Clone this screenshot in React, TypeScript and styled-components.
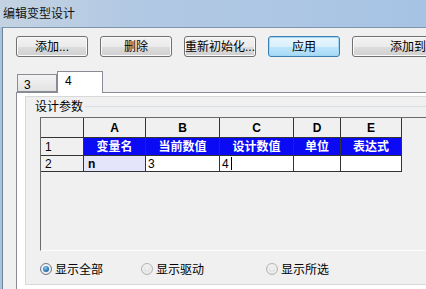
import styled, { createGlobalStyle } from "styled-components";

const GlobalStyle = createGlobalStyle`
    html, body {
        margin: 0;
        padding: 0;
        background: #f0f0f0;
    }
    body {
        font-family: "Liberation Sans", "Noto Sans CJK SC", sans-serif;
        font-size: 12px;
        color: #000;
    }
`;

const Window = styled.div`
    width: 426px;
    height: 289px;
    overflow: hidden;
    display: flex;
    flex-direction: column;
    background: #f0f0f0;
`;

const TitleBar = styled.div`
    flex: none;
    height: 27px;
    box-sizing: border-box;
    display: flex;
    align-items: center;
    padding: 0 0 1px 3px;
    background: linear-gradient(to right, #c4d3e2 0%, #b2c9e3 30%, #a7c3e4 100%);
    font-family: "Noto Sans CJK SC", sans-serif;
    font-size: 12px;
    line-height: 12px;
    color: #111;
`;

const Frame = styled.div`
    flex: 1;
    min-height: 0;
    display: flex;
    border-left: 2px solid #a9c2de;
`;

const Client = styled.div`
    flex: 1;
    min-width: 0;
    display: flex;
    flex-direction: column;
    padding: 8px 0 0 13px;
    border-left: 1px solid #6f8296;
    border-top: 1px solid #7f95ad;
    background: #f0f0f0;
`;

const ButtonRow = styled.div`
    display: flex;
    gap: 12px;
`;

const Button = styled.button<{ $default?: boolean; $w?: number }>`
    flex: none;
    width: ${(p) => p.$w ?? 72}px;
    height: 21px;
    padding: 0;
    box-sizing: border-box;
    border-radius: 3px;
    font-family: "Liberation Sans", "Noto Sans CJK SC", sans-serif;
    font-size: 12px;
    line-height: 12px;
    color: #000;
    border: 1px solid ${(p) => (p.$default ? "#3c7fb1" : "#707070")};
    background: ${(p) =>
        p.$default
            ? "linear-gradient(#eaf6fd 0%, #d9f0fc 50%, #bee6fd 51%, #a7d9f5 100%)"
            : "linear-gradient(#f2f2f2 0%, #ebebeb 50%, #dddddd 51%, #cfcfcf 100%)"};
    box-shadow: ${(p) => (p.$default ? "inset 0 0 0 1px #9fd7f5" : "inset 0 0 0 1px #fbfbfb")};
`;

const TabStrip = styled.div`
    margin-top: 14px;
    height: 21px;
    display: flex;
    align-items: flex-end;
    padding-left: 1px;
    position: relative;
    z-index: 1;
`;

const Tab = styled.div<{ $active?: boolean }>`
    box-sizing: border-box;
    width: ${(p) => (p.$active ? 46 : 40)}px;
    height: ${(p) => (p.$active ? 22 : 18)}px;
    margin-bottom: ${(p) => (p.$active ? -1 : 0)}px;
    padding: ${(p) => (p.$active ? "3px 0 0 7px" : "4px 0 0 6px")};
    border: 1px solid #898c95;
    border-bottom: ${(p) => (p.$active ? "none" : "1px solid #898c95")};
    background: ${(p) => (p.$active ? "#ffffff" : "linear-gradient(#f3f3f3, #e3e3e3)")};
    font-size: 12px;
    line-height: 13px;
`;

const Panel = styled.div`
    flex: 1;
    min-height: 0;
    width: calc(100% + 20px);
    padding: 3px 0 0 8px;
    border: 1px solid #898c95;
    border-right: none;
    border-bottom: none;
    background: #fff;
`;

const Inner = styled.div`
    height: 189px;
    box-sizing: border-box;
    display: flex;
    flex-direction: column;
    background: #f0f0f0;
    border: 1px solid #d8d8d8;
    border-right: none;
`;

const Legend = styled.div`
    margin-top: 1px;
    height: 16px;
    display: flex;
    align-items: center;
    padding-left: 9px;
`;

const LegendText = styled.span`
    font-family: "Noto Sans CJK SC", sans-serif;
    font-size: 12px;
    line-height: 12px;
`;

const LegendLine = styled.span`
    flex: 1;
    margin-left: 2px;
    border-top: 1px solid #d5dfe5;
`;

const GridBox = styled.div`
    flex: none;
    margin: 3px 0 0 14px;
    height: 134px;
    box-sizing: border-box;
    border-top: 1px solid #6a6a6a;
    border-left: 1px solid #6a6a6a;
    border-bottom: 1px solid #fcfcfc;
    background: #f0f0f0;
`;

const Sheet = styled.div`
    display: grid;
    grid-template-columns: 43px 62px 74px 74px 47px 61px;
    grid-template-rows: 20px 18px 16px;
    width: max-content;
`;

type CellKind = "head" | "rowhead" | "title" | "key" | "value";

const cellBg: Record<CellKind, string> = {
    head: "#f0f0f0",
    rowhead: "#f0f0f0",
    title: "#0a0af5",
    key: "#e4e4fa",
    value: "#ffffff",
};

const Cell = styled.div<{ $kind: CellKind }>`
    box-sizing: border-box;
    display: flex;
    align-items: center;
    justify-content: ${(p) => (p.$kind === "head" || p.$kind === "title" ? "center" : "flex-start")};
    padding-left: ${(p) => (p.$kind === "rowhead" || p.$kind === "key" ? 4 : p.$kind === "value" ? 2 : 0)}px;
    border-right: 1px solid #333;
    border-bottom: 1px solid #333;
    background: ${(p) => cellBg[p.$kind]};
    color: ${(p) => (p.$kind === "title" ? "#fff" : "#000")};
    font-weight: ${(p) => (p.$kind === "head" || p.$kind === "title" || p.$kind === "key" ? 700 : 400)};
    font-size: 12px;
    line-height: 12px;
`;

const Caret = styled.span`
    display: inline-block;
    width: 1px;
    height: 13px;
    margin-left: 2px;
    background: #000;
`;

const RadioRow = styled.div`
    flex: none;
    height: 33px;
    box-sizing: border-box;
    padding: 3px 0 0 14px;
    display: flex;
    align-items: center;
`;

const RadioItem = styled.label<{ $w: number }>`
    flex: none;
    width: ${(p) => p.$w}px;
    display: flex;
    align-items: center;
    gap: 3px;
    font-family: "Noto Sans CJK SC", sans-serif;
    font-size: 12px;
    line-height: 12px;
`;

const RadioMark = styled.span<{ $checked?: boolean }>`
    flex: none;
    width: 12px;
    height: 12px;
    box-sizing: border-box;
    border-radius: 50%;
    display: flex;
    align-items: center;
    justify-content: center;
    border: 1px solid ${(p) => (p.$checked ? "#6c7a89" : "#b4b4b4")};
    background: radial-gradient(circle at 50% 40%, #ffffff 0%, #e8e8e8 70%, #d0d0d0 100%);
    &::after {
        content: "";
        width: 6px;
        height: 6px;
        border-radius: 50%;
        background: ${(p) =>
            p.$checked
                ? "radial-gradient(circle at 40% 35%, #8fd0f5 0%, #2a78b8 55%, #144a7a 100%)"
                : "radial-gradient(circle at 50% 40%, #f6f6f6 0%, #d6d6d6 100%)"};
    }
`;

const columns = ["A", "B", "C", "D", "E"];
const titles = ["变量名", "当前数值", "设计数值", "单位", "表达式"];

export default function App() {
    return (
        <Window>
            <GlobalStyle />
            <TitleBar>编辑变型设计</TitleBar>
            <Frame>
                <Client>
                    <ButtonRow>
                        <Button>添加...</Button>
                        <Button>删除</Button>
                        <Button>重新初始化...</Button>
                        <Button $default>应用</Button>
                        <Button $w={122}>添加到...</Button>
                    </ButtonRow>

                    <TabStrip>
                        <Tab>3</Tab>
                        <Tab $active>4</Tab>
                    </TabStrip>

                    <Panel>
                        <Inner>
                            <Legend>
                                <LegendText>设计参数</LegendText>
                                <LegendLine />
                            </Legend>
                            <GridBox>
                                <Sheet>
                                    <Cell $kind="rowhead" />
                                    {columns.map((c) => (
                                        <Cell key={c} $kind="head">
                                            {c}
                                        </Cell>
                                    ))}

                                    <Cell $kind="rowhead">1</Cell>
                                    {titles.map((t) => (
                                        <Cell key={t} $kind="title">
                                            {t}
                                        </Cell>
                                    ))}

                                    <Cell $kind="rowhead">2</Cell>
                                    <Cell $kind="key">n</Cell>
                                    <Cell $kind="value">3</Cell>
                                    <Cell $kind="value">
                                        4<Caret />
                                    </Cell>
                                    <Cell $kind="value" />
                                    <Cell $kind="value" />
                                </Sheet>
                            </GridBox>
                            <RadioRow>
                                <RadioItem $w={101}>
                                    <RadioMark $checked />
                                    显示全部
                                </RadioItem>
                                <RadioItem $w={125}>
                                    <RadioMark />
                                    显示驱动
                                </RadioItem>
                                <RadioItem $w={100}>
                                    <RadioMark />
                                    显示所选
                                </RadioItem>
                            </RadioRow>
                        </Inner>
                    </Panel>
                </Client>
            </Frame>
        </Window>
    );
}
